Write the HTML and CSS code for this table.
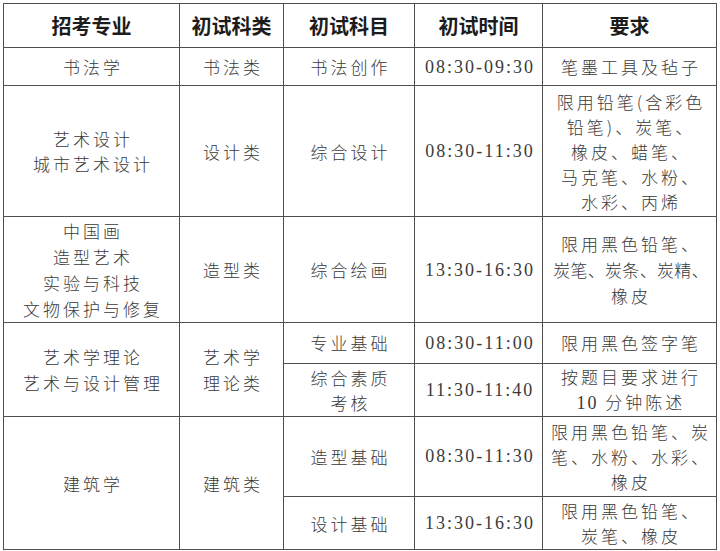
FILE: index.html
```html
<!DOCTYPE html>
<html lang="zh-CN">
<head>
<meta charset="utf-8">
<link rel="stylesheet" href="styles.css">
</head>
<body>
<table class="exam">
  <colgroup>
    <col class="c1"><col class="c2"><col class="c3"><col class="c4"><col class="c5">
  </colgroup>
  <thead>
    <tr class="r-head">
      <th>招考专业</th><th>初试科类</th><th>初试科目</th><th>初试时间</th><th>要求</th>
    </tr>
  </thead>
  <tbody>
    <tr class="r1">
      <td>书法学</td><td>书法类</td><td>书法创作</td><td class="time">08:30-09:30</td><td>笔墨工具及毡子</td>
    </tr>
    <tr class="r2">
      <td>艺术设计<br>城市艺术设计</td><td>设计类</td><td>综合设计</td><td class="time">08:30-11:30</td>
      <td>限用铅笔(含彩色<br>铅笔)、炭笔、<br>橡皮、蜡笔、<br>马克笔、水粉、<br>水彩、丙烯</td>
    </tr>
    <tr class="r3">
      <td>中国画<br>造型艺术<br>实验与科技<br>文物保护与修复</td><td>造型类</td><td>综合绘画</td><td class="time">13:30-16:30</td>
      <td>限用黑色铅笔、<br><span class="tight">炭笔、炭条、炭精、</span><br>橡皮</td>
    </tr>
    <tr class="r4a">
      <td rowspan="2">艺术学理论<br>艺术与设计管理</td><td rowspan="2">艺术学<br>理论类</td><td>专业基础</td><td class="time">08:30-11:00</td>
      <td>限用黑色签字笔</td>
    </tr>
    <tr class="r4b">
      <td>综合素质<br>考核</td><td class="time">11:30-11:40</td><td>按题目要求进行<br><span class="num">10</span> 分钟陈述</td>
    </tr>
    <tr class="r5a">
      <td rowspan="2">建筑学</td><td rowspan="2">建筑类</td><td>造型基础</td><td class="time">08:30-11:30</td>
      <td>限用黑色铅笔、炭<br>笔、水粉、水彩、<br>橡皮</td>
    </tr>
    <tr class="r5b">
      <td>设计基础</td><td class="time">13:30-16:30</td><td>限用黑色铅笔、<br>炭笔、橡皮</td>
    </tr>
  </tbody>
</table>
</body>
</html>
```

FILE: styles.css
```css
html, body {
  margin: 0;
  padding: 0;
  background: #ffffff;
}
body {
  padding: 3px 0 0 3px;
}
.exam {
  border-collapse: collapse;
  table-layout: fixed;
  width: 713px;
  font-family: "Noto Sans CJK SC", "Noto Sans", sans-serif;
  color: #3a3a3a;
}
.c1 { width: 176px; }
.c2 { width: 104px; }
.c3 { width: 131px; }
.c4 { width: 128px; }
.c5 { width: 174px; }
.exam th,
.exam td {
  border: 1.5px solid #505050;
  padding: 0 0 0 3px;
  text-align: center;
  vertical-align: middle;
  white-space: nowrap;
}
.exam th {
  font-size: 20px;
  font-weight: 700;
  color: #1c1c1c;
  letter-spacing: 0;
  padding: 0;
  line-height: 26px;
}
.exam td {
  font-size: 17px;
  font-weight: 300;
  letter-spacing: 3px;
  line-height: 26px;
}
.exam td.time,
.num {
  font-family: "Liberation Serif", "DejaVu Serif", serif;
  font-size: 18px;
  font-weight: 400;
  letter-spacing: 2px;
}
.tight {
  letter-spacing: 0.3px;
}
.r-head { height: 44px; }
.r1 { height: 38px; }
.r2 { height: 131px; }
.r3 { height: 106px; }
.r4a { height: 41px; }
.r4b { height: 52px; }
.r5a { height: 80px; }
.r5b { height: 53px; }
.r2 td { line-height: 25px; }
.r4b td, .r5a td, .r5b td { line-height: 25px; }
```
